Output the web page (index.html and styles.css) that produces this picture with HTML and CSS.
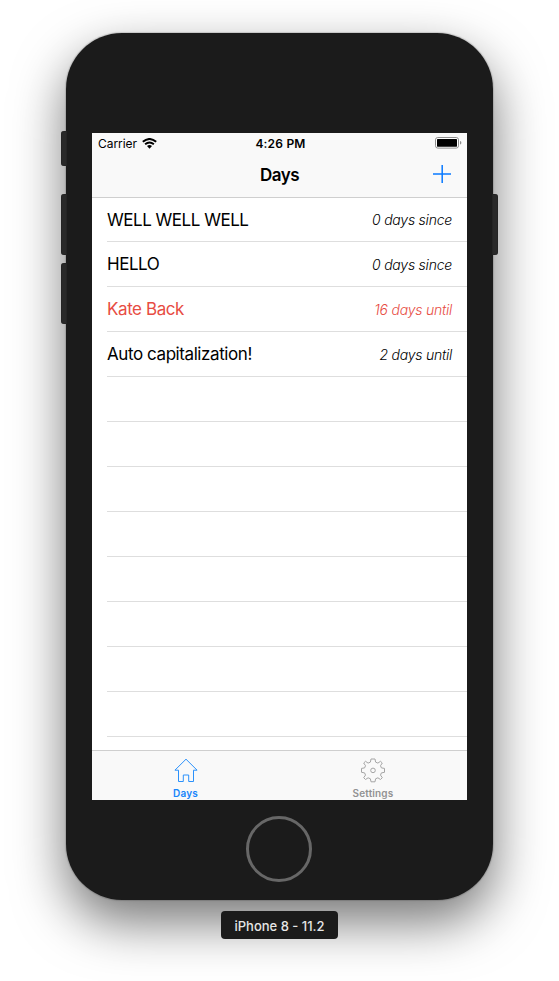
FILE: index.html
```html
<!DOCTYPE html>
<html lang="en">
<head>
<meta charset="utf-8">
<title>Days</title>
<link rel="stylesheet" href="styles.css">
</head>
<body>
<div class="phone">
  <i class="side mute"></i><i class="side volume-up"></i><i class="side volume-down"></i><i class="side power"></i>
  <main class="screen">
    <div class="status">
      <div class="carrier"><span>Carrier</span>
        <svg width="15" height="11" viewBox="0 0 15 11"><g fill="none" stroke="#000" stroke-width="1.9"><path d="M.8 3.8Q7.5-1.9 14.2 3.8"/><path d="M3.1 6.3Q7.5 2.6 11.9 6.3"/></g><path d="M5 8.1Q7.5 6.1 10 8.1L7.5 10.7Z"/></svg>
      </div>
      <span class="time">4:26 PM</span>
      <svg class="battery" width="27" height="12" viewBox="0 0 27 12"><rect x=".5" y=".5" width="23" height="10.6" rx="2.3" fill="#fff" stroke="#8d8d8d"/><rect x="2" y="2" width="20" height="7.7" rx=".6"/><path d="M25 4Q26.4 4.3 26.4 5.8T25 7.6Z" fill="#8d8d8d"/></svg>
    </div>
    <header class="nav"><span></span><h1>Days</h1>
      <svg class="add" width="18" height="18" viewBox="0 0 18 18"><path d="M9.2 0V18M0 9H18" stroke="#0a7aff" stroke-width="1.5"/></svg>
    </header>
    <ul class="list">
      <li><span class="name caps">WELL WELL WELL</span><em>0 days since</em></li>
      <li><span class="name caps">HELLO</span><em>0 days since</em></li>
      <li class="alert"><span class="name">Kate Back</span><em>16 days until</em></li>
      <li><span class="name">Auto capitalization!</span><em>2 days until</em></li>
      <li></li><li></li><li></li><li></li><li></li><li></li><li></li><li></li><li></li>
    </ul>
    <nav class="tabs">
      <a class="active"><svg width="24" height="25" viewBox="0 0 24 25"><path d="M12 1.2L.9 12.2H4.5V23.5H9.3V17H14.7V23.5H19.5V12.2H23.1Z" fill="none" stroke="#2b91fb"/></svg><span>Days</span></a>
      <a><svg width="24" height="25" viewBox="0 0 24 25"><g fill="none" stroke="#a5a5a5"><path d="M10 1H14L14.6 4.1L16.9 5.1L19.5 3.3L21.3 5L19.5 7.7L20.4 9.9L23.5 10.4V14.3L20.4 14.9L19.5 17.1L21.3 19.7L19.5 21.5L16.9 19.8L14.6 20.8L14 23.8H10L9.4 20.8L7.1 19.8L4.5 21.5L2.7 19.7L4.5 17.1L3.6 14.9L.5 14.3V10.4L3.6 9.9L4.5 7.7L2.7 5L4.5 3.3L7.1 5.1L9.4 4.1Z"/><circle cx="12" cy="12.4" r="2.3"/></g></svg><span>Settings</span></a>
    </nav>
  </main>
  <div class="home"></div>
</div>
<div class="device">iPhone 8 - 11.2</div>
</body>
</html>
```
FILE: styles.css
```css
* { box-sizing: border-box; }
body {
  margin: 0; height: 981px; padding-top: 33px; overflow: hidden;
  display: flex; flex-direction: column; align-items: center;
  background: #fff; font-family: Inter, "Liberation Sans", sans-serif;
}
svg { display: block; flex: none; }
.phone {
  position: relative; width: 427px; height: 867px; padding-top: 100px; flex: none;
  display: flex; flex-direction: column; align-items: center;
  background: #1b1b1b; border-radius: 56px;
  box-shadow: 0 0 1px 1px rgba(0,0,0,.14), 0 22px 52px rgba(0,0,0,.54);
}
.side { position: absolute; left: -5px; width: 6px; height: 61px; background: #292929; border-radius: 3px 0 0 3px; box-shadow: inset 0 0 1px #080808; }
.mute { top: 98px; height: 35px; }
.volume-up { top: 161px; }
.volume-down { top: 230px; }
.power { top: 161px; left: auto; right: -5px; border-radius: 0 3px 3px 0; }
.screen { width: 375px; height: 667px; flex: none; display: flex; flex-direction: column; background: #fff; overflow: hidden; }
.status { height: 20px; flex: none; padding: 0 5px 0 6px; display: grid; grid-template-columns: 1fr auto 1fr; align-items: center; background: #f9f9f9; font-size: 12px; line-height: 18px; }
.status span { padding-top: 2px; }
.carrier { display: flex; align-items: center; gap: 5px; letter-spacing: -.05px; }
.time { font-weight: 600; letter-spacing: .2px; margin-left: 1px; }
.battery { justify-self: end; }
.nav { height: 45px; flex: none; padding: 0 16px 2px; display: grid; grid-template-columns: 1fr auto 1fr; align-items: center; background: #f9f9f9; border-bottom: 1px solid #cfcfcf; }
h1 { margin: 0; padding-top: 2px; font-size: 17px; line-height: 20px; font-weight: 600; letter-spacing: -.5px; }
.add { justify-self: end; }
.list { margin: 0; padding: 0 0 0 15px; list-style: none; flex: 1; min-height: 0; overflow: hidden; }
.list li { height: 45px; padding-right: 15px; display: flex; align-items: center; justify-content: space-between; border-bottom: 1px solid #dedede; }
.list li:first-child { height: 44px; }
.name { font-size: 17px; letter-spacing: -.42px; }
.caps { letter-spacing: -.48px; }
.list em { font-size: 14px; font-weight: 300; letter-spacing: -.23px; }
.alert { color: #e74c43; }
.tabs { height: 50px; flex: none; display: grid; grid-template-columns: 187px 188px; border-top: 1px solid #cfcfcf; background: #f9f9f9; }
.tabs a { padding-top: 7px; display: flex; flex-direction: column; align-items: center; gap: 4px; font-size: 10px; line-height: 12px; font-weight: 600; letter-spacing: .15px; color: #929292; }
.tabs .active { color: #1785fb; }
.home { width: 66px; height: 66px; margin: 16px 1px 0 0; flex: none; border: 3px solid #676767; border-radius: 50%; }
.device { position: relative; margin-top: 11px; width: 117px; height: 28px; flex: none; border-radius: 4px; background: #1b1b1b; color: #e6e6e6; text-align: center; font-size: 13px; line-height: 30px; font-weight: 500; }
```
